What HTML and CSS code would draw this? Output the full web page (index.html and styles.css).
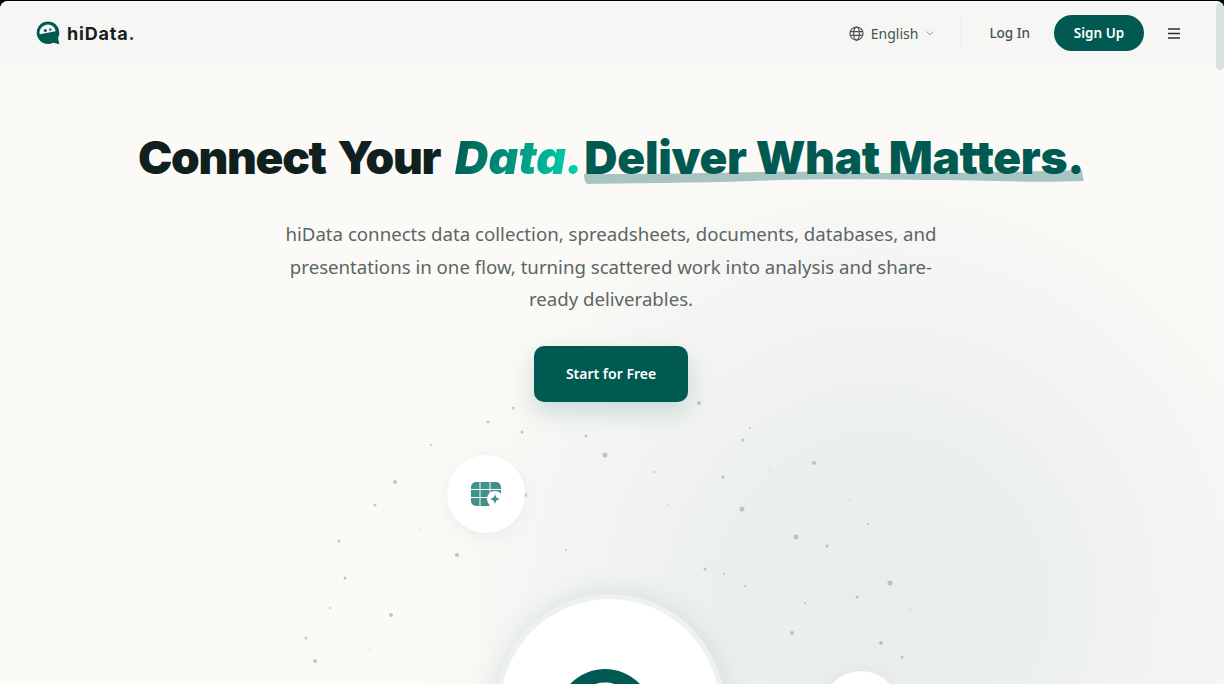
FILE: index.html
```html
<!DOCTYPE html>
<html lang="en">
<head>
    <meta charset="UTF-8">
    <meta name="viewport" content="width=device-width, initial-scale=1.0">
    <title>hiData</title>
    <link rel="stylesheet" href="styles.css">
</head>
<body>
    <div class="page">
        <header class="topbar">
            <a class="brand" href="#">
                <svg class="brand-mark" viewBox="0 0 24 24" width="24" height="24">
                    <path fill="#005a52" d="M12 0.5a11.3 11.3 0 0 1 11.3 11.3c0 2-.5 3.7-1.300 5.200l1.400 6.200-6.200-1.500a11.300 11.300 0 0 1-5.200 1.200A11.300 11.300 0 0 1 .7 11.800 11.300 11.300 0 0 1 12 .5z"/>
                    <path fill="#f6f6f4" d="M12 3.400c4 0 7.300 3 7.600 6.900l-15.800 2.900C3.600 12.700 3.500 12.200 3.500 11.700 3.500 7.100 7.400 3.400 12 3.400z"/>
                    <circle cx="9.300" cy="9.600" r="1.500" fill="#005a52"/>
                    <circle cx="14.300" cy="8.600" r="1.200" fill="#005a52"/>
                </svg>
                <span class="brand-name">hiData<span class="brand-dot">.</span></span>
            </a>
            <nav class="topnav">
                <button class="lang">
                    <svg viewBox="0 0 16 16" width="15" height="15" fill="none" stroke="#48524f" stroke-width="1.200">
                        <circle cx="8" cy="8" r="7"/>
                        <ellipse cx="8" cy="8" rx="3" ry="7"/>
                        <path d="M1.500 6h13M1.500 10h13"/>
                    </svg>
                    <span>English</span>
                    <svg class="chev" viewBox="0 0 8 5" width="8" height="5" fill="none" stroke="#9aa19f" stroke-width="1"><path d="M.5 .5L4 4 7.500 .5"/></svg>
                </button>
                <span class="divider"></span>
                <a class="login" href="#">Log In</a>
                <a class="signup" href="#">Sign Up</a>
                <button class="burger">
                    <svg viewBox="0 0 12 11" width="12" height="11" fill="none" stroke="#27302e" stroke-width="1.300"><path d="M0 1h12M0 5.500h12M0 10h12"/></svg>
                </button>
            </nav>
        </header>

        <main class="hero">
            <div class="glow"></div>
            <svg class="specks" viewBox="0 0 1224 684" width="1224" height="684">
                <g fill="#9aa5a2" opacity=".6">
                    <circle cx="488" cy="422" r="1.500"/><circle cx="513" cy="408" r="1.500"/><circle cx="522" cy="432" r="1.500"/>
                    <circle cx="586" cy="436" r="1.500"/><circle cx="605" cy="455" r="2.500"/><circle cx="654" cy="472" r="1"/>
                    <circle cx="699" cy="403" r="2"/><circle cx="395" cy="482" r="2"/><circle cx="375" cy="505" r="1.500"/>
                    <circle cx="525" cy="495" r="2"/><circle cx="742" cy="509" r="2.500"/><circle cx="723" cy="477" r="1.500"/>
                    <circle cx="814" cy="463" r="2"/><circle cx="750" cy="428" r="1"/><circle cx="743" cy="440" r="1.500"/>
                    <circle cx="796" cy="537" r="2.500"/><circle cx="827" cy="546" r="1.500"/><circle cx="868" cy="524" r="1"/>
                    <circle cx="890" cy="583" r="2.500"/><circle cx="705" cy="569" r="1.500"/><circle cx="724" cy="574" r="1"/>
                    <circle cx="457" cy="555" r="2"/><circle cx="339" cy="541" r="1.500"/><circle cx="345" cy="578" r="1.500"/>
                    <circle cx="330" cy="608" r="1"/><circle cx="391" cy="615" r="2"/><circle cx="306" cy="638" r="1.500"/>
                    <circle cx="315" cy="661" r="2"/><circle cx="805" cy="603" r="1"/><circle cx="857" cy="597" r="1.500"/>
                    <circle cx="792" cy="633" r="2"/><circle cx="881" cy="643" r="2"/><circle cx="902" cy="657" r="1.500"/>
                    <circle cx="566" cy="550" r="1"/><circle cx="431" cy="445" r="1"/><circle cx="745" cy="586" r="1"/>
                </g>
                <g fill="#9aa5a2" opacity=".25">
                    <circle cx="647" cy="629" r="1.500"/><circle cx="420" cy="530" r="1"/><circle cx="360" cy="470" r="1"/>
                    <circle cx="668" cy="505" r="1"/><circle cx="620" cy="520" r="1"/><circle cx="770" cy="470" r="1"/>
                    <circle cx="850" cy="500" r="1"/><circle cx="910" cy="610" r="1"/><circle cx="440" cy="600" r="1"/>
                    <circle cx="370" cy="650" r="1"/>
                </g>
            </svg>

            <div class="hero-copy">
                <h1 class="headline">Connect Your <em class="accent">Data.</em><span class="marked">
                        <svg class="brush" viewBox="0 0 500 14" preserveAspectRatio="none">
                            <path fill="#a8c4c0" d="M0 4C70 4 130 3 175 2 230 1 265 3 320 3 375 3 430 2 498 0L500 11C440 13 400 10 340 10 260 9 220 9 170 11 110 13 50 13 4 14 1 13 0 9 0 4z"/>
                        </svg>
                        <span class="marked-text">Deliver What Matters.</span>
                    </span></h1>
                <p class="lead">hiData connects data collection, spreadsheets, documents, databases, and<br>presentations in one flow, turning scattered work into analysis and share-<br>ready deliverables.</p>
                <a class="cta" href="#">Start for Free</a>
            </div>

            <div class="node node-sheet">
                <svg viewBox="0 0 30 24" width="30" height="24">
                    <rect width="30" height="24" rx="5" fill="#3f918a"/>
                    <path fill="none" stroke="#ffffff" stroke-width="1" d="M9 0v24M19 0v24M0 7.500h30M0 15.500h30"/>
                    <circle cx="24" cy="17" r="8" fill="#ffffff"/>
                    <path fill="#3f918a" d="M24 11.500c.6 3.600 1.400 4.400 5 5.500-3.600 1.100-4.400 1.900-5 5.500-.6-3.600-1.400-4.400-5-5.500 3.600-1.100 4.400-1.900 5-5.500z"/>
                </svg>
            </div>
            <div class="node node-core">
                <svg class="core-mark" viewBox="0 0 24 24" width="96" height="96">
                    <path fill="#005a52" d="M12 0a12 12 0 0 1 12 12c0 2-.5 3.700-1.300 5.200l1.300 6.800-6.200-1.500A12 12 0 0 1 0 12 12 12 0 0 1 12 0z"/>
                    <path fill="#ffffff" d="M12 3.400c4 0 7.300 3 7.600 6.900l-15.800 2.900C3.600 12.700 3.500 12.200 3.500 11.700 3.500 7.100 7.400 3.400 12 3.400z"/>
                </svg>
            </div>
            <div class="node node-low"></div>
        </main>

        <div class="scrollthumb"></div>
    </div>
</body>
</html>
```

FILE: styles.css
```css
* {
    box-sizing: border-box;
}
html, body {
    margin: 0;
    height: 100%;
    overflow: hidden;
    background-color: #000;
}
body {
    font-family: "Noto Sans", "Open Sans", sans-serif;
    color: #10201f;
}
a {
    text-decoration: none;
}
button {
    background: none;
    border: none;
    padding: 0;
    font: inherit;
}
.page {
    position: relative;
    height: 683px;
    margin-top: 1px;
    background-color: #fbfaf7;
    border-radius: 8px 8px 0 0;
    overflow: hidden;
}

/* top bar */
.topbar {
    height: 64px;
    padding: 0 44px 0 36px;
    display: flex;
    align-items: center;
    justify-content: space-between;
    background-color: #f6f6f4;
    position: relative;
    z-index: 2;
}
.brand {
    display: flex;
    align-items: center;
    gap: 7px;
}
.brand-name {
    font-family: "Inter", sans-serif;
    font-size: 18px;
    font-weight: 700;
    letter-spacing: .8px;
    color: #1b1d1d;
}
.brand-dot {
    color: #005a52;
}
.topnav {
    display: flex;
    align-items: center;
}
.lang {
    display: flex;
    align-items: center;
    gap: 7px;
    font-size: 14px;
    color: #48524f;
}
.chev {
    margin-left: 1px;
}
.divider {
    width: 1px;
    height: 36px;
    margin: 0 27px;
    background-color: #e9eae7;
}
.login {
    font-size: 13.500px;
    font-weight: 500;
    color: #48524f;
}
.signup {
    width: 90px;
    height: 36px;
    margin: 0 24px;
    border-radius: 18px;
    display: flex;
    align-items: center;
    justify-content: center;
    background-color: #005a52;
    color: #fff;
    font-size: 13.500px;
    font-weight: 600;
}
.burger {
    display: flex;
}

/* hero */
.hero {
    position: absolute;
    inset: 0;
}
.glow {
    position: absolute;
    inset: 0;
    background:
        radial-gradient(circle 470px at 880px 600px, #e9eeeb 0%, #ecf0ed 35%, #f3f5f2 65%, rgba(251, 250, 247, 0) 100%);
}
.specks {
    position: absolute;
    left: 0;
    top: -1px;
    filter: blur(.4px);
}
.hero-copy {
    position: relative;
    padding: 127px 2px 0 0;
    display: flex;
    flex-direction: column;
    align-items: center;
}
.headline {
    margin: 0;
    font-family: "Inter", sans-serif;
    font-size: 46px;
    line-height: 58px;
    font-weight: 900;
    letter-spacing: -1.300px;
    word-spacing: 4px;
    white-space: nowrap;
    color: #10201f;
}
.accent {
    margin-left: 3px;
    background: linear-gradient(100deg, #005a52 0%, #00cfac 90%);
    -webkit-background-clip: text;
    background-clip: text;
    color: transparent;
    padding-right: 1px;
    letter-spacing: .1px;
}
.marked {
    position: relative;
    display: inline-block;
    letter-spacing: -.3px;
    word-spacing: 0;
}
.marked-text {
    position: relative;
    color: #005a52;
}
.brush {
    position: absolute;
    left: 0;
    right: 0;
    top: 42px;
    width: 100%;
    height: 14px;
}
.lead {
    margin: 32px 0 0;
    text-align: center;
    font-size: 18.650px;
    line-height: 32.500px;
    color: #5c6664;
}
.cta {
    margin-top: 30px;
    width: 154px;
    height: 56px;
    border-radius: 10px;
    display: flex;
    align-items: center;
    justify-content: center;
    background-color: #005a52;
    color: #fff;
    font-size: 14px;
    font-weight: 600;
    box-shadow: 0 10px 24px rgba(0, 90, 82, .18);
}

/* floating circles */
.node {
    position: absolute;
    border-radius: 50%;
    background-color: #fff;
    display: flex;
    align-items: center;
    justify-content: center;
}
.node-sheet {
    left: 447px;
    top: 454px;
    width: 78px;
    height: 78px;
    box-shadow: 0 4px 18px rgba(0, 60, 55, .05);
}
.node-core {
    left: 495px;
    top: 593px;
    width: 230px;
    height: 230px;
    border: 5px solid #edf1ef;
    box-shadow: 0 0 30px rgba(0, 70, 65, .12);
}
.core-mark {
    position: absolute;
    left: 57px;
    top: 70px;
}
.node-low {
    left: 822px;
    top: 670px;
    width: 78px;
    height: 78px;
    box-shadow: 0 0 18px rgba(0, 60, 55, .05);
}
.scrollthumb {
    position: absolute;
    right: 0;
    top: 2px;
    width: 8px;
    height: 67px;
    border-radius: 4px;
    background-color: #d9e2e0;
    z-index: 3;
}
```
